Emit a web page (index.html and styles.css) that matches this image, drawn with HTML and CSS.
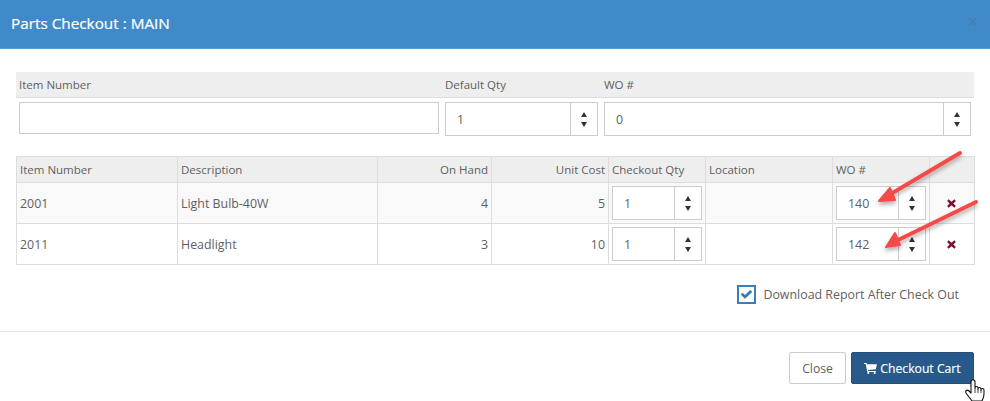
FILE: index.html
```html
<!DOCTYPE html>
<html lang="en">
<head>
<meta charset="utf-8">
<title>Parts Checkout</title>
<link rel="stylesheet" href="styles.css">
</head>
<body>
<div class="modal">
  <header class="modal-header">
    <h1 class="modal-title">Parts Checkout : MAIN</h1>
    <span class="modal-x">×</span>
  </header>
  <section class="modal-body">
    <div class="filter-labels">
      <span class="fl-item">Item Number</span>
      <span class="fl-qty">Default Qty</span>
      <span class="fl-wo">WO #</span>
    </div>
    <div class="filter-inputs">
      <div class="text-input"></div>
      <div class="spin spin-qty"><span class="spin-val">1</span><span class="spin-btn"><i class="up"></i><i class="down"></i></span></div>
      <div class="spin spin-wo"><span class="spin-val">0</span><span class="spin-btn"><i class="up"></i><i class="down"></i></span></div>
    </div>
    <table class="cart">
      <colgroup>
        <col class="c1"><col class="c2"><col class="c3"><col class="c4"><col class="c5"><col class="c6"><col class="c7"><col class="c8">
      </colgroup>
      <thead>
        <tr><th>Item Number</th><th>Description</th><th class="num">On Hand</th><th class="num">Unit Cost</th><th>Checkout Qty</th><th>Location</th><th>WO #</th><th></th></tr>
      </thead>
      <tbody>
        <tr class="odd">
          <td>2001</td><td>Light Bulb-40W</td><td class="num">4</td><td class="num">5</td>
          <td class="ctl"><div class="spin spin-cell"><span class="spin-val">1</span><span class="spin-btn"><i class="up"></i><i class="down"></i></span></div></td>
          <td></td>
          <td class="ctl"><div class="spin spin-cell"><span class="spin-val">140</span><span class="spin-btn"><i class="up"></i><i class="down"></i></span></div></td>
          <td class="del"><svg class="del-icon" viewBox="0 0 10 10"><path d="M1.8 0.4 5 3 8.2 0.4 9.8 2.2 7.1 5 9.8 7.8 8.2 9.6 5 7 1.8 9.6 0.2 7.8 2.9 5 0.2 2.2Z"/></svg></td>
        </tr>
        <tr>
          <td>2011</td><td>Headlight</td><td class="num">3</td><td class="num">10</td>
          <td class="ctl"><div class="spin spin-cell"><span class="spin-val">1</span><span class="spin-btn"><i class="up"></i><i class="down"></i></span></div></td>
          <td></td>
          <td class="ctl"><div class="spin spin-cell"><span class="spin-val">142</span><span class="spin-btn"><i class="up"></i><i class="down"></i></span></div></td>
          <td class="del"><svg class="del-icon" viewBox="0 0 10 10"><path d="M1.8 0.4 5 3 8.2 0.4 9.8 2.2 7.1 5 9.8 7.8 8.2 9.6 5 7 1.8 9.6 0.2 7.8 2.9 5 0.2 2.2Z"/></svg></td>
        </tr>
      </tbody>
    </table>
    <div class="download">
      <span class="check"><svg viewBox="0 0 14 10"><path d="M0.6 5.2 2.6 3 5.3 5.6 11.2 0 13.4 2.2 5.3 9.8Z"/></svg></span>
      <span>Download Report After Check Out</span>
    </div>
  </section>
  <footer class="modal-footer">
    <button class="btn btn-close">Close</button>
    <button class="btn btn-primary"><svg class="cart-icon" viewBox="0 0 14 12"><path d="M0 0H2.7L3.1 1.4H14L12.8 6.8 4.2 7.6 4.5 8.6H12.8V9.7H3.5L1.7 1.2H0Z"/><circle cx="4.6" cy="10.9" r="1.1"/><circle cx="11.6" cy="10.9" r="1.1"/></svg>Checkout Cart</button>
  </footer>
</div>
<svg class="overlay" viewBox="0 0 990 401">
  <defs>
    <filter id="sh" x="-20%" y="-20%" width="140%" height="150%"><feDropShadow dx="0" dy="3" stdDeviation="2.2" flood-color="#000" flood-opacity=".3"/></filter>
  </defs>
  <g filter="url(#sh)" fill="#f64a4a" stroke="#f64a4a" stroke-linejoin="round" stroke-linecap="round">
    <path d="M960 153 889 195" stroke-width="4" fill="none"/>
    <path d="M879 201 890 188 895 200Z" stroke-width="2"/>
    <path d="M976 202 896 241" stroke-width="4" fill="none"/>
    <path d="M886 247 895 233 900 245Z" stroke-width="2"/>
  </g>
  <path class="hand" d="M971 382c0-3 4-3 4 0V388c0-2 3-2 3 0V389c0-2 3-2 3 0V390c0-2 3-2 3 0V394c0 3-1 5-2 7H972C970 398 968 396 966 393c-1-2 1-4 3-2L971 393Z"/>
  <path class="hand-lines" d="M975 388V393M978 389V393M981 390V393"/>
</svg>
</body>
</html>
```

FILE: styles.css
```css
* { box-sizing: border-box; }
html, body { margin: 0; padding: 0; }
body {
  width: 990px;
  height: 401px;
  overflow: hidden;
  background: #fff;
  position: relative;
  font-family: "Open Sans", "Noto Sans", sans-serif;
  font-size: 11.5px;
  color: #5f5f5f;
}
.modal-header {
  height: 49px;
  background: #418aca;
  border-bottom: 1px solid #5a9ad2;
  display: flex;
  align-items: center;
  justify-content: space-between;
  padding: 0 11px;
}
.modal-title {
  margin: 0;
  font-size: 15.3px;
  font-weight: 400;
  color: #fff;
  position: relative;
  top: -1px;
  -webkit-text-stroke: 0.2px #fff;
}
.modal-x {
  font-size: 18px;
  color: #4f7ba5;
  position: relative;
  top: -3px;
  left: -1px;
}
.modal-body { padding: 23px 16px 0; height: 283px; border-bottom: 1px solid #e5e5e5; }
.filter-labels {
  height: 26px;
  background: #eee;
  border-bottom: 1px solid #ddd;
  display: grid;
  grid-template-columns: 429px 159px 1fr;
  align-items: center;
  padding-bottom: 1px;
  color: #5f5f5f;
}
.fl-item { padding-left: 3px; }
.filter-inputs {
  display: grid;
  grid-template-columns: 420px 153px 367px;
  column-gap: 6px;
  padding: 4px 0 0 3px;
  align-items: start;
  height: 58px;
}
.text-input { height: 32px; border: 1px solid #ccc; background: #fff; }
.spin {
  height: 34px;
  border: 1px solid #ccc;
  background: #fff;
  display: flex;
  align-items: center;
  font-size: 12.4px;
}
.spin-val { flex: 1; padding-left: 11px; }
.spin-btn {
  width: 27px;
  height: 100%;
  border-left: 1px solid #ccc;
  display: flex;
  flex-direction: column;
  align-items: center;
  justify-content: center;
  gap: 5px;
}
.up, .down { display: block; width: 0; height: 0; border-left: 3.5px solid transparent; border-right: 3.5px solid transparent; }
.up { border-bottom: 5px solid #333; }
.down { border-top: 5px solid #333; }
.cart {
  width: 958px;
  table-layout: fixed;
  border-collapse: collapse;
  border: 1px solid #ddd;
  font-size: 11.5px;
}
.c1 { width: 161px; }
.c2 { width: 200px; }
.c3 { width: 114px; }
.c4 { width: 117px; }
.c5 { width: 97px; }
.c6 { width: 127px; }
.c7 { width: 97px; }
.c8 { width: 45px; }
.cart th, .cart td { border: 1px solid #ddd; padding: 0 3px; text-align: left; font-weight: 400; }
.cart th { height: 26px; background: #eee; color: #5f5f5f; padding-bottom: 1px; }
.cart td { height: 41px; font-size: 12.4px; }
.cart th.num, .cart td.num { text-align: right; }
.cart .odd td { background: #f9f9f9; }
.cart td.ctl { padding: 0 3px; }
.spin-cell { height: 34px; background: #fff; width: 90px; }
td.del { text-align: center; }
.del-icon { width: 9px; height: 9px; fill: #7a1030; display: block; margin: 0 auto; position: relative; left: -1px; }
.download {
  display: flex;
  justify-content: flex-end;
  align-items: center;
  gap: 7px;
  margin-top: 20px;
  padding-right: 15px;
  font-size: 12.4px;
  color: #5f5f5f;
}
.check {
  width: 19px;
  height: 19px;
  border: 2px solid #3a7fbd;
  display: flex;
  align-items: center;
  justify-content: center;
}
.check svg { width: 13px; height: 9px; fill: #337ab7; }
.modal-footer {
  display: flex;
  justify-content: flex-end;
  gap: 5px;
  padding: 20px 16px 0;
}
.btn {
  height: 32px;
  font: inherit;
  font-size: 12.2px;
  border-radius: 2px;
  padding: 0;
  display: flex;
  align-items: center;
  justify-content: center;
}
.btn-close { width: 57px; background: #fff; border: 1px solid #ccc; color: #5f5f5f; }
.btn-primary { width: 123px; background: #275a8a; border: 1px solid #234f79; color: #fff; gap: 3px; -webkit-text-stroke: 0.15px #fff; }
.cart-icon { width: 13px; height: 11px; fill: #fff; }
.overlay { position: absolute; left: 0; top: 0; width: 990px; height: 401px; pointer-events: none; }
.hand { fill: #fff; stroke: #111; stroke-width: 1.1; stroke-linejoin: round; }
.hand-lines { fill: none; stroke: #111; stroke-width: 0.8; }
```
